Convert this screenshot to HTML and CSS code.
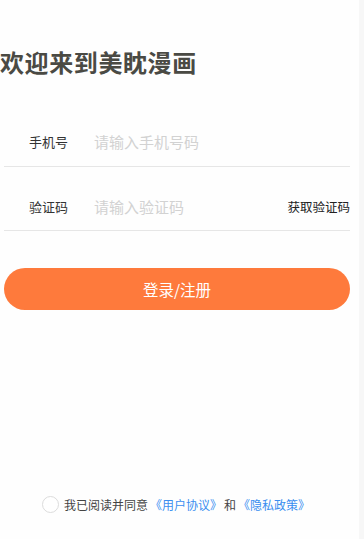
FILE: index.html
```html
<!DOCTYPE html>
<html lang="zh">
<head>
<meta charset="utf-8">
<link rel="stylesheet" href="styles.css">
</head>
<body>
<div class="app">
  <h1 class="title">欢迎来到美眈漫画</h1>
  <div class="form">
    <div class="row">
      <span class="label">手机号</span>
      <span class="placeholder">请输入手机号码</span>
    </div>
    <div class="row">
      <span class="label">验证码</span>
      <span class="placeholder">请输入验证码</span>
      <span class="code">获取验证码</span>
    </div>
    <div class="btn">登录/注册</div>
  </div>
  <div class="spacer"></div>
  <div class="agree">
    <span class="radio"></span>
    <span class="agree-text">我已阅读并同意</span><span class="link">《用户协议》</span><span class="agree-text">和</span><span class="link">《隐私政策》</span>
  </div>
</div>
</body>
</html>
```
FILE: styles.css
```css
html, body {
  margin: 0;
  padding: 0;
  height: 100%;
  background: #f7f7f7;
}
body {
  font-family: "Noto Sans CJK SC", "Noto Sans", sans-serif;
}
.app {
  width: 359px;
  height: 539px;
  background: #fefefe;
  display: flex;
  flex-direction: column;
}
.title {
  margin: 44px 0 0 0;
  font-size: 24px;
  line-height: 36px;
  font-weight: bold;
  color: #4a4a44;
  letter-spacing: 0.6px;
}
.form {
  margin: 23px 9px 0 4px;
  display: flex;
  flex-direction: column;
}
.row {
  height: 64px;
  border-bottom: 1px solid #e6e6e6;
  display: flex;
  align-items: center;
  padding: 0 0 14px 25px;
  box-sizing: border-box;
  align-items: flex-end;
  line-height: 20px;
}
.row + .row {
  padding-bottom: 13px;
}
.label {
  width: 65px;
  font-size: 13px;
  color: #333;
}
.placeholder {
  flex: 1;
  font-size: 15px;
  color: #d2d2d2;
}
.code {
  font-size: 12.5px;
  color: #222;
}
.btn {
  margin-top: 37px;
  height: 42px;
  border-radius: 21px;
  background: #fe7a3c;
  color: #fff;
  font-size: 15.5px;
  display: flex;
  align-items: center;
  justify-content: center;
}
.spacer {
  flex: 1;
}
.agree {
  display: flex;
  align-items: center;
  padding-left: 42px;
  margin-bottom: 26px;
  font-size: 12px;
}
.radio {
  width: 15px;
  height: 15px;
  border: 1px solid #dcdcdc;
  border-radius: 50%;
  margin-right: 5px;
  background: #fff;
}
.agree-text {
  color: #444;
}
.link {
  color: #3a8ef0;
  margin: 0 2px;
}
```
